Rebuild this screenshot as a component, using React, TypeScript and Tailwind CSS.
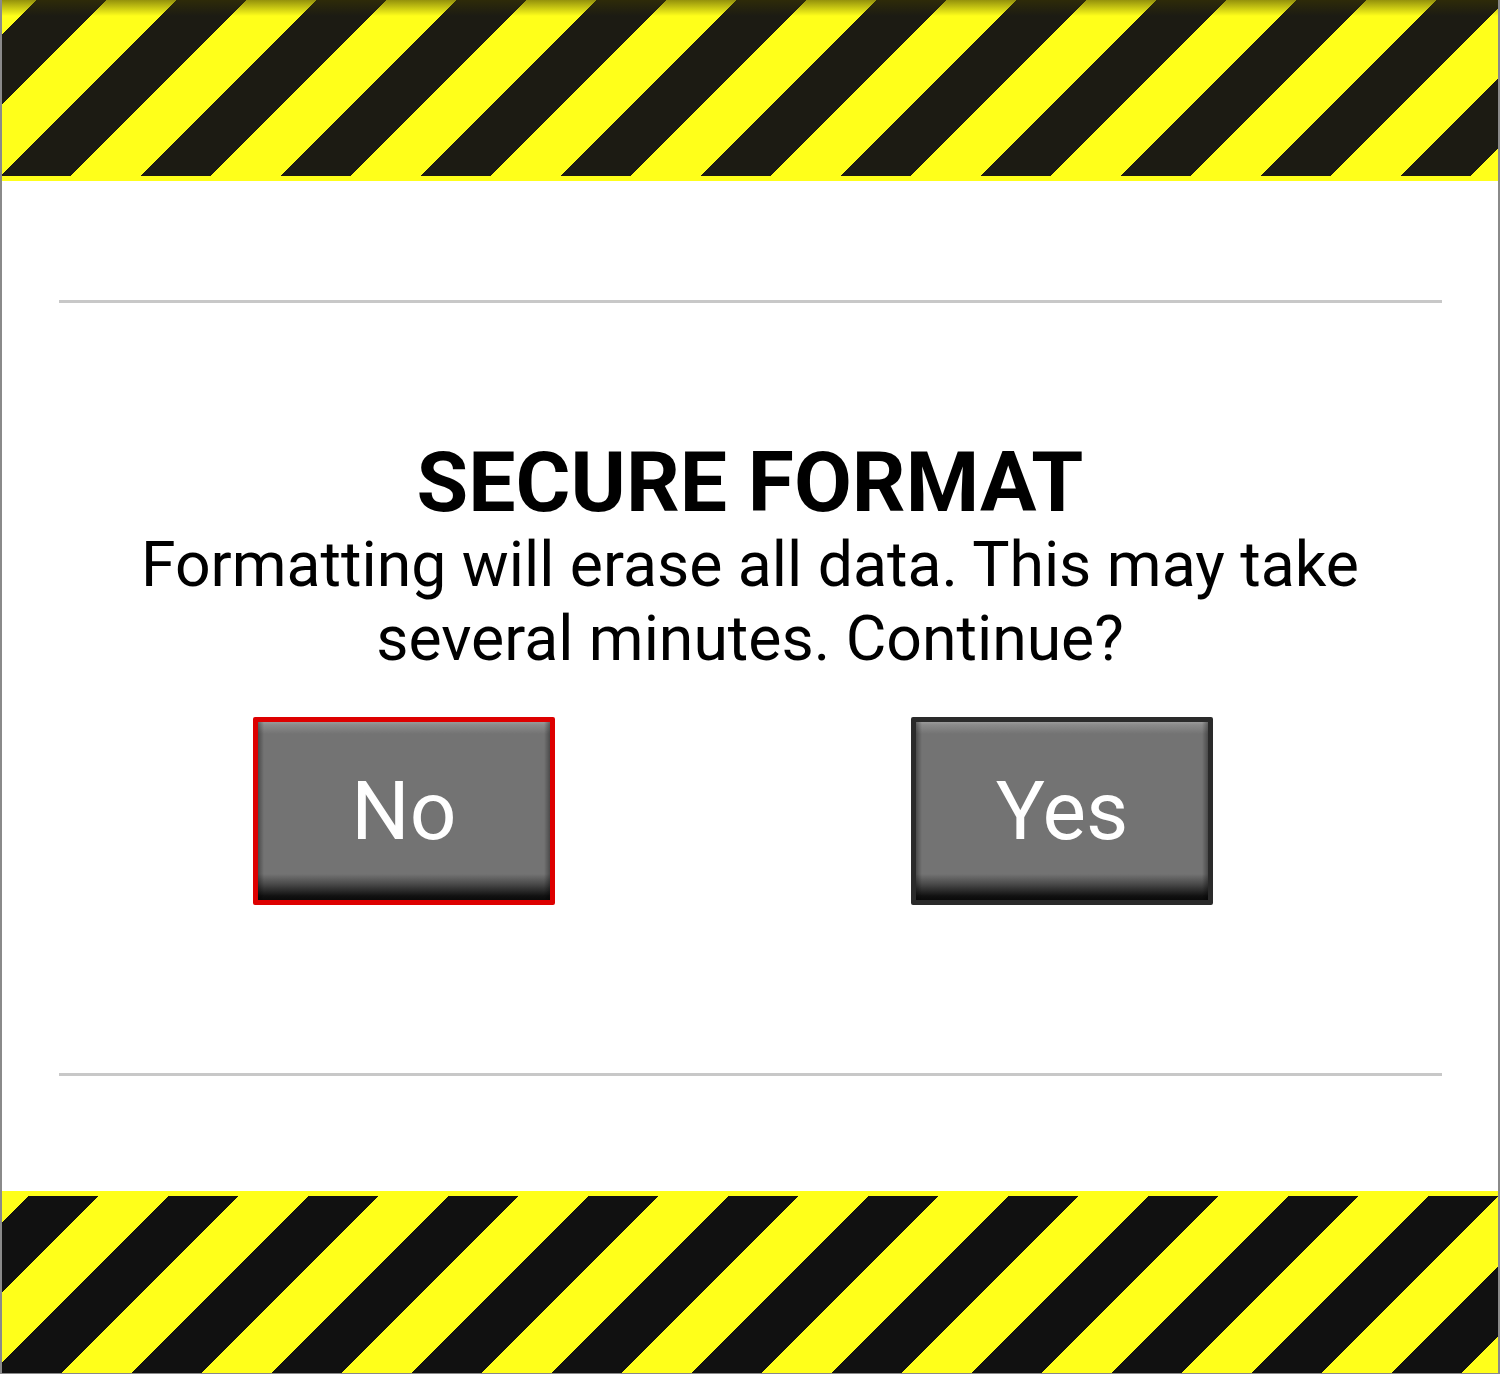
import React from "react";

function HazardTop() {
  return (
    <div className="relative h-[181px] w-full bg-[#ffff1a]">
      <div className="h-[176px] w-full bg-[repeating-linear-gradient(135deg,#1c1b13_0px,#1c1b13_49.5px,#ffff1a_49.5px,#ffff1a_99px)] bg-[length:140px_140px] bg-[position:34px_0px]" />
      <div className="pointer-events-none absolute inset-x-0 top-0 h-[16px] bg-[linear-gradient(to_bottom,rgba(60,55,0,0.55),rgba(60,55,0,0))]" />
    </div>
  );
}

function HazardBottom() {
  return (
    <div className="h-[182px] w-full bg-[#ffff1a] pt-[5px]">
      <div className="h-full w-full bg-[repeating-linear-gradient(135deg,#111111_0px,#111111_49.5px,#ffff1a_49.5px,#ffff1a_99px)] bg-[length:140px_140px] bg-[position:26px_0px]" />
    </div>
  );
}

function Btn({ label, selected }: { label: string; selected?: boolean }) {
  return (
    <button
      className={
        selected
          ? "relative flex h-[188px] w-[302px] items-center justify-center rounded-[2px] border-[5px] border-[#dd0000] bg-[#737373]"
          : "relative flex h-[188px] w-[302px] items-center justify-center rounded-[2px] border-[5px] border-[#2a2a2a] bg-[#737373]"
      }
    >
      <div className="pointer-events-none absolute inset-0 bg-[linear-gradient(to_bottom,#9a9a9a_0px,#8a8a8a_3px,#737373_12px,#737373_calc(100%-26px),#4a4a4a_calc(100%-16px),#111111_calc(100%-4px),#0a0a0a_100%)]" />
      <div className="pointer-events-none absolute inset-0 bg-[linear-gradient(to_right,rgba(0,0,0,0.35)_0px,rgba(0,0,0,0)_6px,rgba(0,0,0,0)_calc(100%-6px),rgba(0,0,0,0.35)_100%)]" />
      <span className="relative text-[82px] leading-none text-white [font-family:Roboto,'Noto_Sans',sans-serif]">
        {label}
      </span>
    </button>
  );
}

export default function App() {
  return (
    <div className="h-[1374px] w-[1500px] overflow-hidden border-x-2 border-b border-[#8a8a8a] bg-white [font-family:Roboto,'Noto_Sans',sans-serif]">
      <div className="flex h-full flex-col">
        <HazardTop />
        <div className="flex flex-1 flex-col items-center">
          <div className="mt-[119px] h-[3px] w-[1383px] bg-[#c8c8c8]" />
          <h1 className="mt-[138px] text-[84px] font-bold leading-[84px] text-black">
            SECURE FORMAT
          </h1>
          <p className="mt-[3px] w-[1300px] text-center text-[62.5px] leading-[74px] text-black">
            Formatting will erase all data. This may take several minutes. Continue?
          </p>
          <div className="mt-[41px] flex w-full gap-[356px] pl-[251px]">
            <Btn label="No" selected />
            <Btn label="Yes" />
          </div>
          <div className="mt-[168px] h-[3px] w-[1383px] bg-[#c8c8c8]" />
        </div>
        <HazardBottom />
      </div>
    </div>
  );
}
